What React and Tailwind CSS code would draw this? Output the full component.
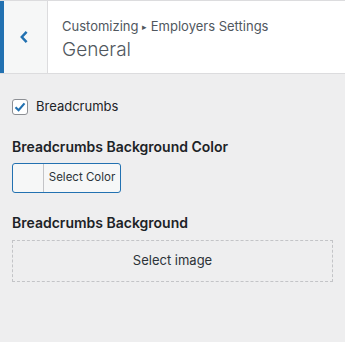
import React from "react";

const font = { fontFamily: "Inter, 'Noto Sans', sans-serif" };

function Header() {
	return (
		<div className="flex h-[74px] border-t border-b border-[#dcdcde] bg-white">
			<div className="w-[4px] bg-[#2271b1]" />
			<button className="flex w-[44px] items-center justify-center border-r border-[#dcdcde] bg-[#f6f7f7]">
				<svg width="10" height="14" viewBox="0 0 10 14" className="ml-[-3px]">
					<path d="M7.6 1.8 L2.8 7 L7.6 12.2" fill="none" stroke="#2271b1" strokeWidth="2.5" />
				</svg>
			</button>
			<div className="flex flex-col pl-[14px] pt-[16px]">
				<div className="text-[13px] leading-[18px] text-[#50575e]">
					Customizing <span className="text-[9px] align-[1px]">▸</span> Employers Settings
				</div>
				<div className="mt-[2px] text-[19px] leading-[24px] font-light text-[#50575e]">General</div>
			</div>
		</div>
	);
}

export default function App() {
	return (
		<div className="w-[345px] h-[342px] bg-[#eeeeef] text-[#1d2327]" style={font}>
			<Header />
			<div className="px-[12px] pt-[23px]">
				<label className="flex items-center gap-[8px]">
					<span className="flex h-[16px] w-[16px] items-center justify-center rounded-[3px] border border-[#8c8f94] bg-white">
						<svg width="14" height="14" viewBox="0 0 14 14">
							<path d="M2.5 7.2 L5.6 10.2 L11.5 3.4" fill="none" stroke="#2271b1" strokeWidth="2.2" />
						</svg>
					</span>
					<span className="text-[13px] text-[#1d2327]">Breadcrumbs</span>
				</label>

				<div className="mt-[20px] text-[14px] leading-[20px] font-semibold text-[#1d2327]">
					Breadcrumbs Background Color
				</div>
				<div className="mt-[6px] flex h-[30px] w-[109px] overflow-hidden rounded-[3px] border border-[#2271b1] bg-[#f6f7f7]">
					<div className="w-[31px] border-r border-[#c3c4c7]" />
					<div className="flex flex-1 items-center justify-center text-[11.5px] text-[#2c3338]">Select Color</div>
				</div>

				<div className="mt-[20px] text-[14px] leading-[20px] font-semibold text-[#1d2327]">
					Breadcrumbs Background
				</div>
				<div className="mt-[7px] flex h-[42px] w-[321px] items-center justify-center border border-dashed border-[#c3c4c7] text-[13px] text-[#2c3338]">
					Select image
				</div>
			</div>
		</div>
	);
}
